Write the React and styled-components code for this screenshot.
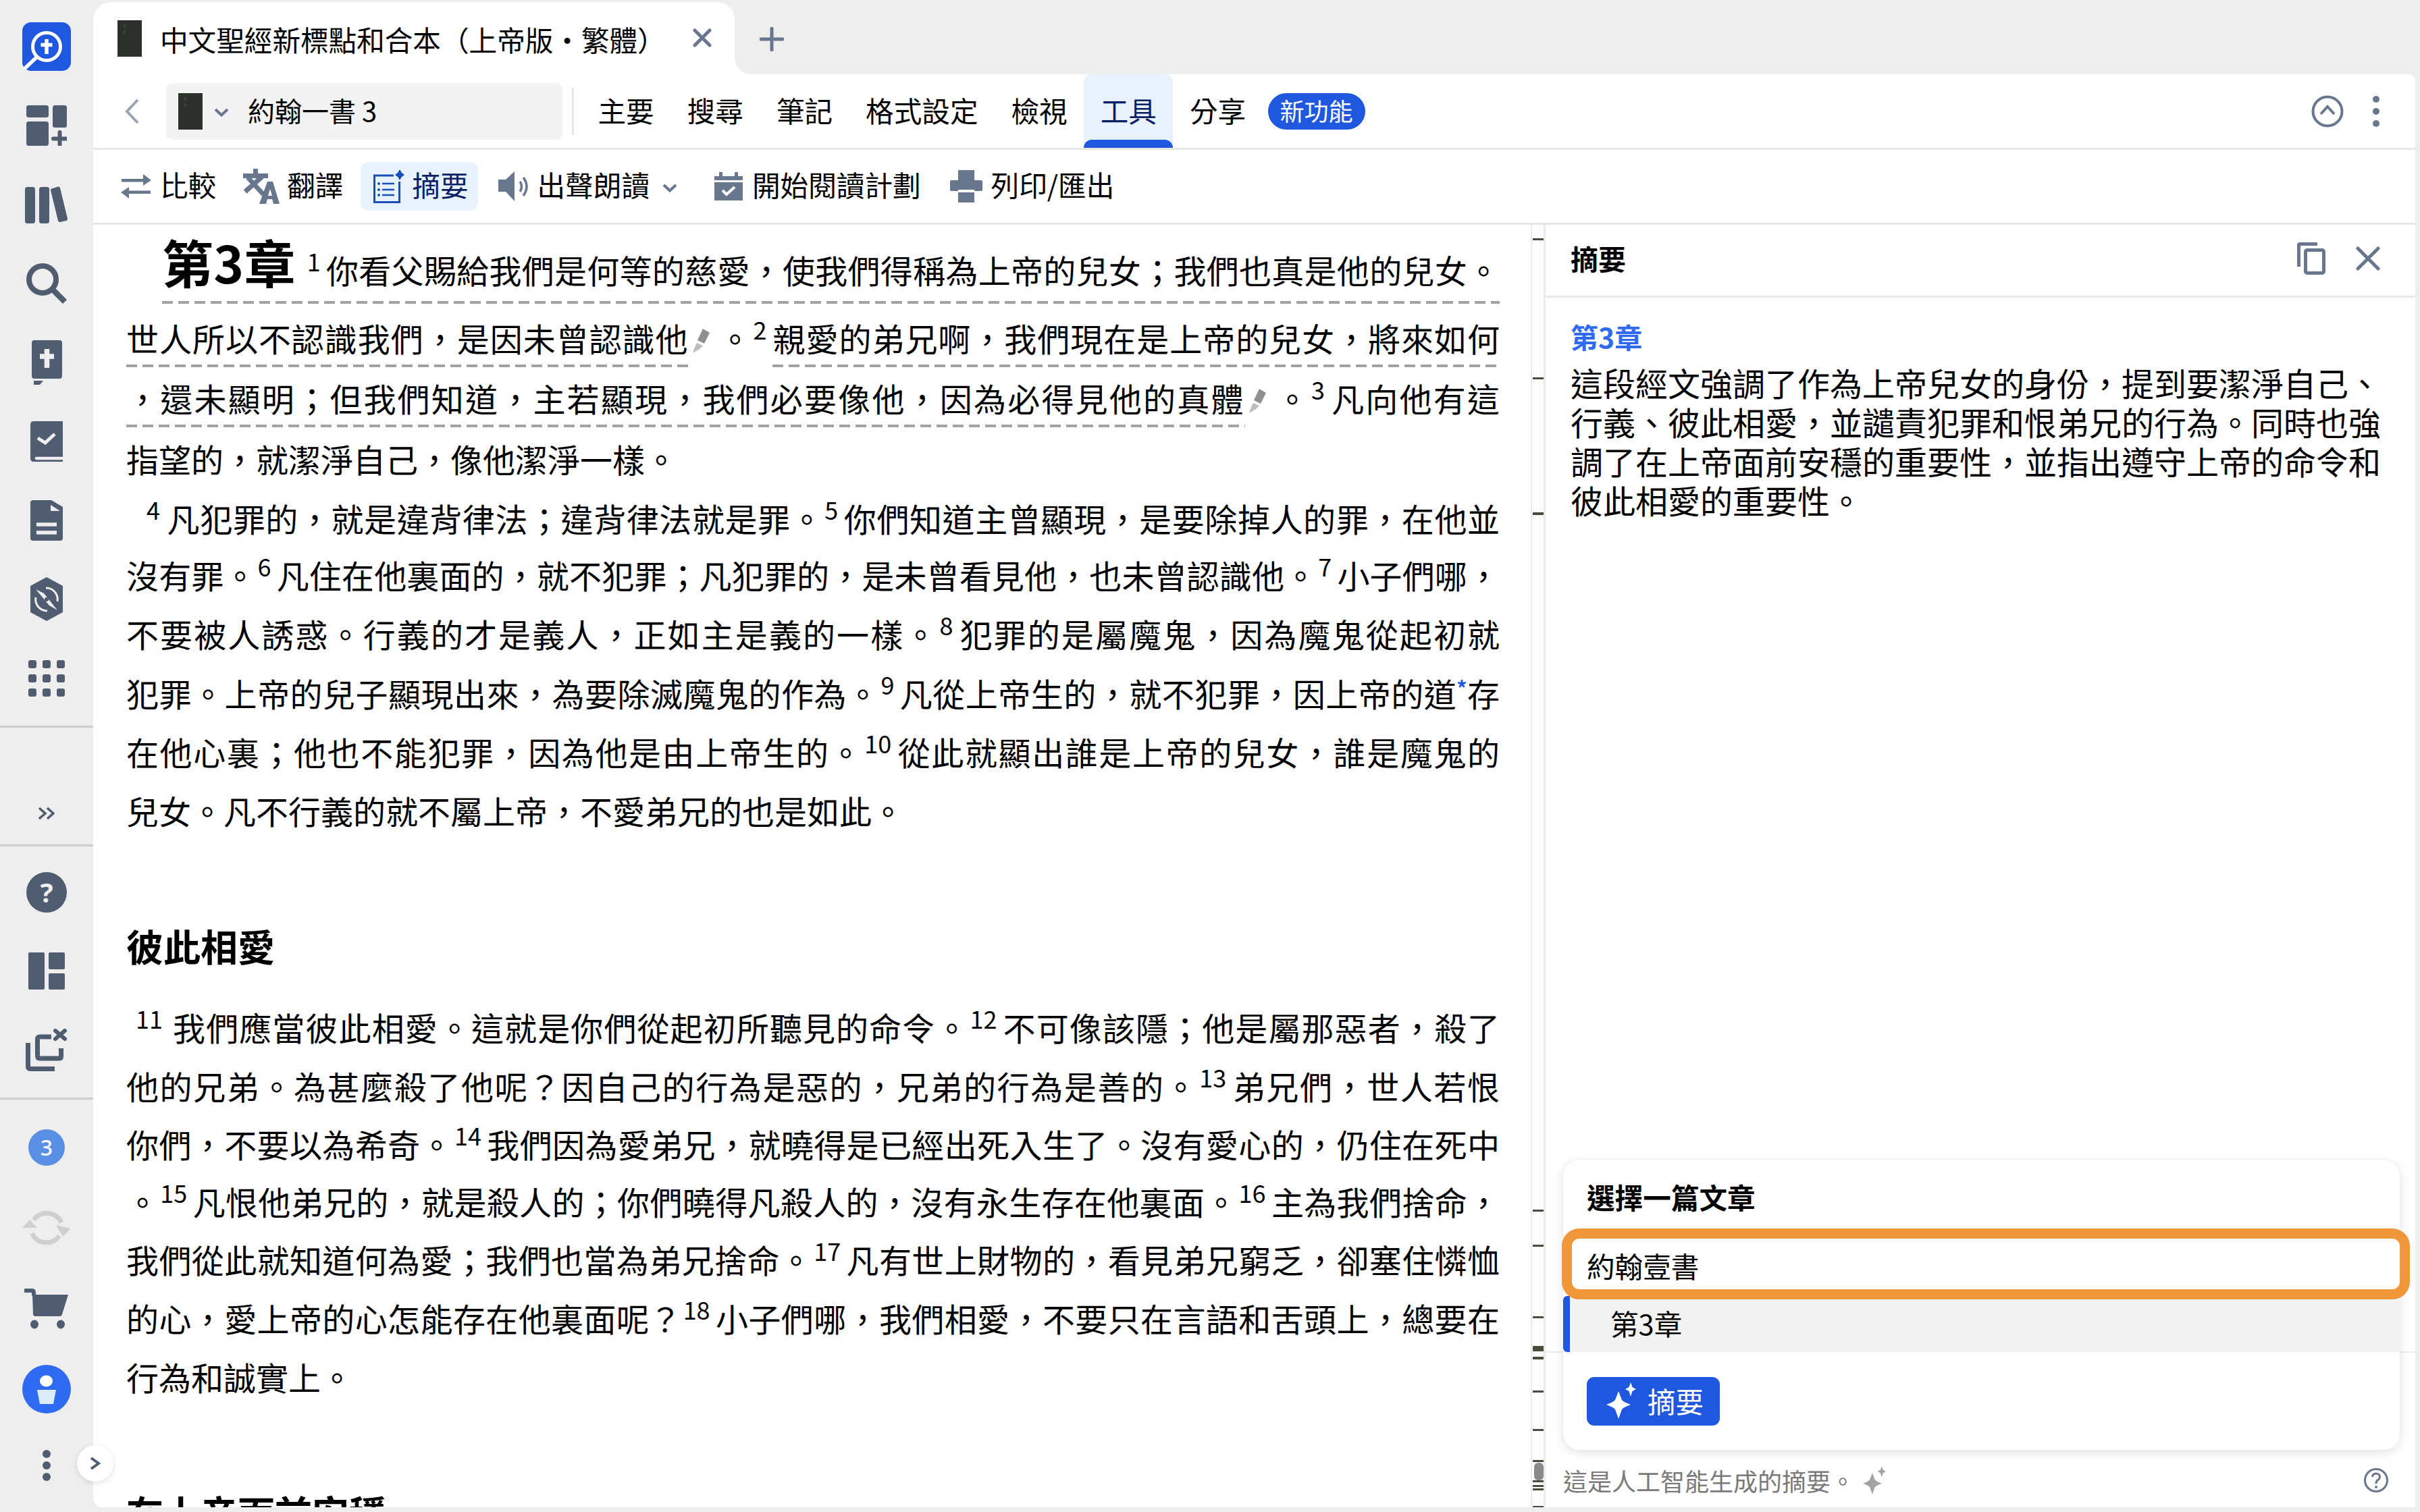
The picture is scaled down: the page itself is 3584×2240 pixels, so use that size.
import React from 'react';
import styled, { createGlobalStyle } from 'styled-components';

const Global = createGlobalStyle`
  html, body { margin: 0; padding: 0; background: #eeeeee; }
  * { box-sizing: border-box; }
  body { font-family: "Noto Sans CJK TC", "Noto Sans", sans-serif; color: #000; }
`;

const slate = '#505c70';
const steel = '#68768e';
const blue = '#1f57de';
const navy = '#0b1f66';

// ---- rail icons

const LogoIcon = () => (
  <svg width="72" height="72" viewBox="0 0 72 72">
    <rect width="72" height="72" rx="13" fill={blue} />
    <circle cx="36" cy="36" r="20.5" fill="none" stroke="#fff" strokeWidth="5" />
    <path d="M21 52 L3 69" stroke="#fff" strokeWidth="5.5" />
    <path d="M36 25 V47 M27.5 33.5 H44.5" stroke="#fff" strokeWidth="5.5" />
  </svg>
);
const DashIcon = () => (
  <svg width="60" height="60" viewBox="0 0 60 60" fill={slate}>
    <rect width="33" height="18" rx="3.5" />
    <rect y="24" width="33" height="36" rx="3.5" />
    <rect x="39" width="21" height="33" rx="3.5" />
    <path d="M49.5 40 V59 M40 49.5 H59" stroke={slate} strokeWidth="6" strokeLinecap="round" />
  </svg>
);
const LibraryIcon = () => (
  <svg width="64" height="56" viewBox="0 -2 64 56" fill={slate}>
    <rect width="15" height="54" rx="3.5" />
    <rect x="21" width="15" height="54" rx="3.5" />
    <path d="M39.5 2.5 L49 -.5 Q51.5 -1 52 1.5 L63 47 Q63.4 49 61 50 L52 52 Q50 52.4 49 50 L38 5 Q37.6 3 39.5 2.5Z" />
  </svg>
);
const SearchIcon = () => (
  <svg width="60" height="60" viewBox="0 0 60 60" fill="none" stroke={slate} strokeWidth="8">
    <circle cx="24" cy="24" r="20" />
    <path d="M39 39 L57 57" strokeWidth="8.5" />
  </svg>
);
const BiblePlusIcon = () => (
  <svg width="45" height="66" viewBox="0 0 45 66" fill={slate}>
    <rect width="45" height="57" rx="4" />
    <path d="M22.5 13 V41 M12 24 H33" stroke="#eee" strokeWidth="7.5" />
    <path d="M3 60 H17 L12 66 H3Z" />
  </svg>
);
const BookCheckIcon = () => (
  <svg width="48" height="60" viewBox="0 0 48 60" fill={slate}>
    <path d="M5 0 H48 V60 H5 Q0 60 0 55 V5 Q0 0 5 0Z" />
    <path d="M11 25 L22 32 L36 19" fill="none" stroke="#eee" strokeWidth="5" />
    <path d="M9 55 H48" stroke="#eee" strokeWidth="4.5" strokeLinecap="round" />
  </svg>
);
const DocIcon = () => (
  <svg width="48" height="60" viewBox="0 0 48 60" fill={slate}>
    <path d="M4 0 H31 L48 10 V56 Q48 60 44 60 H4 Q0 60 0 56 V4 Q0 0 4 0Z" />
    <path d="M30 7 L44 16 H30Z" fill="#eee" />
    <path d="M9 36 H39 M9 48 H39" stroke="#eee" strokeWidth="5.5" />
  </svg>
);
const CompassIcon = () => (
  <svg width="48" height="66" viewBox="0 0 48 66" fill={slate}>
    <path d="M24 0 L48 13 V52 L24 65 L0 52 V13Z" />
    <path d="M8 18 L20 24 L40 49 L28 42Z" fill="#eee" />
    <circle cx="24" cy="33" r="3" fill={slate} />
    <path d="M23 16 A17 17 0 0 1 40 36 M25 50 A17 17 0 0 1 8 30" fill="none" stroke="#eee" strokeWidth="3" />
  </svg>
);
const GridIcon = () => (
  <svg width="54" height="54" viewBox="0 0 54 54" fill={slate}>
    {[0, 21, 42].flatMap((y) =>
      [0, 21, 42].map((x) => <rect key={`${x}-${y}`} x={x} y={y} width="12" height="12" rx="3" />)
    )}
  </svg>
);
const ChevronsIcon = () => (
  <svg width="24" height="20" viewBox="0 0 24 20" fill="none" stroke={slate} strokeWidth="3.5">
    <path d="M1 2 L10 10 L1 18 M13 2 L22 10 L13 18" />
  </svg>
);
const LayoutIcon = () => (
  <svg width="54" height="55" viewBox="0 0 54 55" fill={slate}>
    <rect width="24" height="55" rx="2" />
    <rect x="30" width="24" height="25" rx="2" />
    <rect x="30" y="31" width="24" height="24" rx="2" />
  </svg>
);
const CloseAllIcon = () => (
  <svg width="62" height="63" viewBox="0 0 62 63" fill="none" stroke={slate} strokeWidth="7">
    <path d="M38 12 H21 Q17.5 12 17.5 16 V40 Q17.5 44 21 44 H50 Q52.5 44 52.5 41 V29" />
    <path d="M3.5 21 V56 Q3.5 59.5 7 59.5 H43" />
    <path d="M44 3 L58 15 M58 3 L44 15" strokeLinecap="round" strokeWidth="6" />
  </svg>
);
const SyncIcon = () => (
  <svg width="72" height="60" viewBox="0 0 72 60" fill="none" stroke="#cfcfcf" strokeWidth="7">
    <path d="M17 18 A24 24 0 0 1 58 22" />
    <path d="M55 42 A24 24 0 0 1 14 38" />
    <path d="M0 30 L11 18 L22 30Z M50 26 L72 31 L60 43Z" fill="#cfcfcf" stroke="none" />
  </svg>
);
const CartIcon = () => (
  <svg width="66" height="60" viewBox="0 0 66 60" fill={slate}>
    <path d="M2 3 H12 Q14 3 14 6 V9" fill="none" stroke={slate} strokeWidth="6" strokeLinecap="round" />
    <path d="M12 9 H65 L56 38 Q55.5 41 52 41 H17 Q13 41 13 38Z" />
    <ellipse cx="15" cy="53" rx="6" ry="6.5" />
    <ellipse cx="54" cy="53" rx="6" ry="6.5" />
  </svg>
);
const UserIcon = () => (
  <svg width="72" height="72" viewBox="0 0 72 72">
    <circle cx="36" cy="36" r="36" fill="#2e6bf2" />
    <ellipse cx="35.5" cy="24" rx="9.5" ry="8.5" fill="#fff" />
    <path d="M22 37 H50 L46 58 H26Z" fill="#dcecfb" />
  </svg>
);
const DotsIcon = ({ color = slate, r = 6 }) => (
  <svg width={r * 2} height="48" viewBox={`0 0 ${r * 2} 48`} fill={color}>
    <circle cx={r} cy={r + 1} r={r} />
    <circle cx={r} cy="24" r={r} />
    <circle cx={r} cy={47 - r} r={r} />
  </svg>
);

// ---- toolbar icons

const CoverIcon = () => (
  <svg width="36" height="54" viewBox="0 0 36 54">
    <rect width="36" height="54" fill="#2b302b" />
    <rect x="9" y="6" width="3" height="5" fill="#3f4539" />
    <rect x="9" y="15" width="3" height="5" fill="#3f4539" />
  </svg>
);
const Cross = ({ size, width = 5 }) => (
  <svg width={size} height={size} viewBox={`0 0 ${size} ${size}`} fill="none" stroke={steel} strokeWidth={width} strokeLinecap="round">
    <path d={`M3 3 L${size - 3} ${size - 3} M${size - 3} 3 L3 ${size - 3}`} />
  </svg>
);
const PlusIcon = () => (
  <svg width="36" height="36" viewBox="0 0 36 36" fill="none" stroke={steel} strokeWidth="5" strokeLinecap="round">
    <path d="M18 2 V34 M2 18 H34" />
  </svg>
);
const BackIcon = () => (
  <svg width="24" height="38" viewBox="0 0 24 38" fill="none" stroke="#98a3b5" strokeWidth="4">
    <path d="M20 2 L4 19 L20 36" />
  </svg>
);
const Caret = ({ w = 22 }) => (
  <svg width={w} height="13" viewBox="0 0 22 13" fill="none" stroke={steel} strokeWidth="4">
    <path d="M2 2 L11 10.5 L20 2" />
  </svg>
);
const UpCircleIcon = () => (
  <svg width="48" height="48" viewBox="0 0 48 48" fill="none" stroke={steel} strokeWidth="4">
    <circle cx="24" cy="24" r="21.5" />
    <path d="M14 28 L24 17 L34 28" />
  </svg>
);
const CompareIcon = () => (
  <svg width="45" height="36" viewBox="0 0 45 36" fill={steel}>
    <rect x="1" y="7" width="34" height="4.5" />
    <path d="M33 0 L45 9 L33 17Z" />
    <rect x="10" y="24.5" width="34" height="4.5" />
    <path d="M12 19 L0 27 L12 36Z" />
  </svg>
);
const TranslateIcon = () => (
  <svg width="54" height="52" viewBox="0 0 54 52" fill={steel}>
    <rect x="15" width="7" height="9" />
    <rect y="7" width="37" height="7" />
    <path d="M7 13 L30 38" fill="none" stroke={steel} strokeWidth="7" />
    <path d="M28 12 L3 34" fill="none" stroke={steel} strokeWidth="7" />
    <path d="M36 19 H44 L54 52 H45 L43 45 H36 L34 52 H24Z" />
    <path d="M40 30 L37 40 H43Z" fill="#fff" />
  </svg>
);
const SummaryIcon = () => (
  <svg width="46" height="50" viewBox="0 0 46 50" fill="none" stroke="#1a4fb8" strokeWidth="3">
    <path d="M30 9 H1.5 V48.5 H38.5 V18" />
    <path d="M13 21 H31 M13 30 H31 M13 38 H31" strokeWidth="2.6" />
    <circle cx="8" cy="21" r="2" fill="#1a4fb8" stroke="none" />
    <circle cx="8" cy="30" r="2" fill="#1a4fb8" stroke="none" />
    <circle cx="8" cy="38" r="2" fill="#1a4fb8" stroke="none" />
    <path d="M39 0 L42 5 L46 8 L42 11 L39 16 L36 11 L32 8 L36 5Z" fill="#1a4fb8" stroke="none" />
  </svg>
);
const SpeakerIcon = () => (
  <svg width="46" height="44" viewBox="0 0 46 44" fill={steel}>
    <path d="M0 12 H11 L24 0 V44 L11 30 H0Z" />
    <path d="M32 15 Q37 22 32 30 M37 9 Q47 22 37 36" fill="none" stroke={steel} strokeWidth="3.5" />
  </svg>
);
const CalendarIcon = () => (
  <svg width="42" height="42" viewBox="0 0 42 42" fill={steel}>
    <rect x="7" width="5" height="6" />
    <rect x="30" width="5" height="6" />
    <rect y="6" width="42" height="6" />
    <rect y="15" width="42" height="27" />
    <path d="M12 27 L18 33 L30 22" fill="none" stroke="#fff" strokeWidth="4" />
  </svg>
);
const PrinterIcon = () => (
  <svg width="48" height="48" viewBox="0 0 48 48" fill={steel}>
    <rect x="12" width="24" height="15" />
    <rect y="15" width="48" height="16" rx="2" />
    <rect x="12" y="33" width="24" height="15" />
    <rect x="12" y="29" width="24" height="4" fill="#fff" />
  </svg>
);
const CopyIcon = () => (
  <svg width="42" height="48" viewBox="0 0 42 48" fill="none" stroke={steel} strokeWidth="5">
    <path d="M2.5 36 V4 Q2.5 2.5 4 2.5 H30" />
    <rect x="12.5" y="11.5" width="27" height="34" rx="2.5" />
  </svg>
);
const SparkleMark = styled.svg`
  flex: none;
  margin-left: ${(p) => p.$ml || 0}px;
`;
const Sparkles = ({ color, w = 44, h = 54, ml }) => (
  <SparkleMark $ml={ml} width={w} height={h} viewBox="0 0 44 54" fill={color}>
    <path d="M18 13 L23 26 Q25 29 36 33 Q25 37 23 40 L18 54 L13 40 Q11 37 0 33 Q11 29 13 26Z" />
    <path d="M36 0 L38.5 7 L44 10 L38.5 13 L36 21 L33.5 13 L28 10 L33.5 7Z" />
  </SparkleMark>
);
const HelpIcon = () => (
  <svg width="36" height="38" viewBox="0 0 36 38" fill="none" stroke={steel} strokeWidth="3">
    <circle cx="18" cy="19" r="16.5" />
    <path d="M12.5 14 Q13 9 18 9 Q23.5 9.5 23.5 14 Q23.5 17 20 19 Q18 20.5 18 24" />
    <circle cx="18" cy="29" r="2" fill={steel} stroke="none" />
  </svg>
);
const PenMark = styled.svg`
  display: inline-block;
  width: 26px;
  height: 36px;
  margin: 0 12px 0 6px;
  vertical-align: -2px;
`;
const Pen = () => (
  <PenMark viewBox="0 0 26 36">
    <path d="M15 0 L25 6 L17 22 L7 17Z" fill="#8f8f8f" />
    <path d="M6 21 L15 25 L10 30 L0 36 L3 27Z" fill="#bdbdbd" />
  </PenMark>
);

// ---- page frame

const Page = styled.div`
  display: flex;
  width: 3584px;
  height: 2240px;
  overflow: hidden;
  background: #eeeeee;
`;

const Rail = styled.nav`
  position: relative;
  flex: 0 0 138px;
  display: flex;
  flex-direction: column;
`;

const RailGroup = styled.div`
  flex: none;
  padding-top: ${(p) => p.$top}px;
  display: flex;
  flex-direction: column;
  justify-content: ${(p) => (p.$h ? 'center' : 'flex-start')};
  align-items: center;
  height: ${(p) => (p.$h ? `${p.$h}px` : 'auto')};
`;

const RailSlot = styled.div`
  height: ${(p) => p.$h || 117}px;
  width: 100%;
  display: flex;
  align-items: center;
  justify-content: center;
`;

const RailDivider = styled.div`
  height: 3px;
  background: #cfcfcf;
  margin-top: ${(p) => p.$mt || 0}px;
  flex: none;
`;

const HelpDot = styled.div`
  width: 60px;
  height: 60px;
  border-radius: 50%;
  background: ${slate};
  color: #eee;
  font: 700 40px/60px "Noto Sans", sans-serif;
  text-align: center;
`;

const CountBadge = styled.div`
  width: 54px;
  height: 54px;
  border-radius: 50%;
  background: #5a8fe6;
  color: #fff;
  font: 500 32px/54px "Noto Sans", sans-serif;
  text-align: center;
`;

const ExpandButton = styled.button`
  position: absolute;
  left: 114px;
  top: 2141px;
  width: 54px;
  height: 54px;
  padding: 0;
  border: none;
  border-radius: 50%;
  background: #fff;
  box-shadow: 0 2px 8px rgba(0, 0, 0, 0.12);
  display: flex;
  align-items: center;
  justify-content: center;
  z-index: 5;
`;

const Workspace = styled.div`
  flex: 1;
  min-width: 0;
  display: flex;
  flex-direction: column;
  padding: 0 7px 7px 0;
`;

const TabStrip = styled.div`
  height: 110px;
  flex: none;
  padding-top: 3px;
  display: flex;
`;

const Tab = styled.div`
  position: relative;
  width: 950px;
  background: #fff;
  border-radius: 26px 26px 0 0;
  display: flex;
  align-items: flex-start;
  padding: 27px 0 0 36px;

  &::after {
    content: '';
    position: absolute;
    right: -24px;
    bottom: 0;
    width: 24px;
    height: 24px;
    background: radial-gradient(circle at 100% 0, transparent 23.5px, #fff 24px);
  }
`;

const TabTitle = styled.span`
  margin-left: 27px;
  font-size: 41.6px;
  line-height: 56px;
  white-space: nowrap;
`;

const TabClose = styled.span`
  position: absolute;
  left: 888px;
  top: 39px;
  line-height: 0;
`;

const TabAdd = styled.span`
  margin: 37px 0 0 37px;
  line-height: 0;
`;

const Surface = styled.div`
  flex: 1;
  min-height: 0;
  background: #fff;
  border-radius: 0 10px 0 14px;
  display: flex;
  flex-direction: column;
  overflow: hidden;
`;

const Ribbon = styled.div`
  height: 112px;
  flex: none;
  display: flex;
  align-items: center;
  border-bottom: 3px solid #e6e6e6;
  padding: 0 53px 0 46px;
`;

const RibbonBack = styled.span`
  line-height: 0;
  margin-right: 38px;
`;

const BookPicker = styled.div`
  width: 587px;
  height: 84px;
  background: #f3f3f3;
  border-radius: 9px;
  display: flex;
  align-items: center;
  padding-left: 18px;
  font-size: 40px;
  flex: none;
`;

const BookName = styled.span`
  margin-bottom: 4px;
`;

const PickerCaret = styled.span`
  line-height: 0;
  margin: 0 28px 0 17px;
`;

const RibbonDivider = styled.div`
  width: 3px;
  height: 70px;
  background: #e6e6e6;
  margin: 0 11px 0 14px;
  flex: none;
`;

const NavItem = styled.div`
  position: relative;
  align-self: stretch;
  display: flex;
  align-items: center;
  padding: 0 24.5px 4px;
  font-size: 41.6px;
  white-space: nowrap;
  color: ${(p) => (p.$active ? navy : '#000')};
  background: ${(p) => (p.$active ? '#e8f2fc' : 'transparent')};
  border-radius: ${(p) => (p.$active ? '12px 12px 0 0' : '0')};

  &::after {
    content: ${(p) => (p.$active ? "''" : 'none')};
    position: absolute;
    left: 0;
    right: 0;
    bottom: 0;
    height: 12px;
    background: ${blue};
    border-radius: 12px 12px 0 0;
  }
`;

const NewBadge = styled.span`
  width: 144px;
  height: 54px;
  margin-left: 8px;
  border-radius: 27px;
  background: ${blue};
  color: #fff;
  font-size: 36px;
  line-height: 50px;
  text-align: center;
  flex: none;
`;

const RibbonEnd = styled.div`
  margin-left: auto;
  display: flex;
  align-items: center;
  gap: 43px;
  line-height: 0;
`;

const Tools = styled.div`
  height: 111px;
  flex: none;
  display: flex;
  align-items: center;
  border-bottom: 3px solid #e6e6e6;
  padding-left: 41px;
`;

const Tool = styled.div`
  display: flex;
  align-items: center;
  height: 72px;
  gap: ${(p) => p.$gap || 13}px;
  padding: ${(p) => (p.$active ? '0 14px 0 19px' : '0')};
  margin-left: ${(p) => p.$ml || 0}px;
  font-size: 41.6px;
  white-space: nowrap;
  color: ${(p) => (p.$active ? navy : '#000')};
  background: ${(p) => (p.$active ? '#e8f2fc' : 'transparent')};
  border-radius: 12px;
`;

const ToolLabel = styled.span`
  margin-bottom: 6px;
`;

const ToolCaret = styled.span`
  line-height: 0;
  margin-left: 6px;
`;

const Body = styled.div`
  flex: 1;
  min-height: 0;
  display: flex;
`;

// ---- reader

const Reader = styled.article`
  flex: 0 0 2129px;
  overflow: hidden;
  padding: 0 46px 0 49px;
  font-size: 48px;
`;

const Line = styled.div`
  height: ${(p) => p.$h || 87}px;
  line-height: ${(p) => p.$lh || p.$h || 87}px;
  text-align: justify;
  text-align-last: ${(p) => (p.$last ? 'left' : 'justify')};
  padding-left: ${(p) => p.$indent || 0}px;
`;

const ChapterMark = styled.span`
  font-size: 76px;
  font-weight: 700;
  margin-right: 15px;
`;

const Verse = styled.sup`
  font-size: 36px;
  line-height: 0;
  vertical-align: 18px;
  margin: 0 ${(p) => p.$gap || 8}px 0 2px;
`;

const Note = styled.sup`
  color: ${blue};
  font-size: 30px;
  font-weight: 700;
  line-height: 0;
  vertical-align: 16px;
`;

const Marked = styled.span`
  padding-bottom: ${(p) => (p.$far ? 16 : 9)}px;
  background: repeating-linear-gradient(90deg, #a2a2a2 0 16px, transparent 16px 24px) left bottom / 100% 4px no-repeat;
`;

const SectionTitle = styled.h2`
  margin: ${(p) => p.$top}px 0 ${(p) => p.$bottom}px;
  font-size: 55px;
  line-height: 80px;
  font-weight: 700;
`;

// ---- minimap strip

const MarkStrip = styled.div`
  position: relative;
  flex: 0 0 22px;
  background: #fdfdfd;
  border-left: 2px solid #ececec;
  border-right: 3px solid #ececec;
`;

const Tick = styled.i`
  position: absolute;
  left: 1px;
  right: 0;
  top: ${(p) => p.$y - 333}px;
  height: ${(p) => p.$h || 3}px;
  background: #4c4a3c;
`;

const Thumb = styled.i`
  position: absolute;
  left: 3px;
  width: 14px;
  top: ${2167 - 333}px;
  height: 26px;
  border-radius: 6px;
  background: #8a8a8a;
`;

// ---- summary panel

const Panel = styled.aside`
  flex: 1;
  min-width: 0;
  display: flex;
  flex-direction: column;
  background: #fff;
  isolation: isolate;
`;

const PanelHead = styled.header`
  height: 108px;
  flex: none;
  display: flex;
  align-items: center;
  padding: 0 52px 5px 37px;
  border-bottom: 3px solid #e8e8e8;
`;

const PanelTitle = styled.h3`
  margin: 0 0 3px;
  font-size: 41px;
  font-weight: 700;
`;

const PanelActions = styled.div`
  margin-left: auto;
  display: flex;
  align-items: center;
  gap: 45px;
  line-height: 0;
`;

const PanelText = styled.div`
  flex: 1;
  min-height: 0;
  padding: 33px 37px 0 37px;
`;

const PartTitle = styled.div`
  color: #2f6bf0;
  font-size: 41px;
  font-weight: 700;
  line-height: 48px;
  margin-bottom: 15px;
`;

const PartBody = styled.p`
  margin: 0;
  font-size: 48px;
  line-height: 58px;
`;

const Picker = styled.section`
  position: relative;
  flex: none;
  margin: 0 23px 0 26px;
  height: 429px;
  background: #fff;
  border-radius: 24px;
  box-shadow: 0 3px 16px rgba(0, 0, 0, 0.13);

  &::before {
    content: '';
    position: absolute;
    left: -26px;
    right: -23px;
    top: 283px;
    height: 2px;
    background: #ececec;
    z-index: -1;
  }
`;

const PickerTitle = styled.div`
  height: 101px;
  padding: 28px 0 0 35px;
  font-size: 41.6px;
  font-weight: 700;
  line-height: 52px;
`;

const PickerBook = styled.div`
  position: relative;
  z-index: 1;
  height: 105px;
  margin: 0 -15px 0 -2px;
  border: 15px solid #f0973a;
  border-radius: 26px;
  background: #fff;
  padding: 5px 0 0 22px;
  display: flex;
  align-items: center;
  font-size: 41.6px;
`;

const PickerChapter = styled.div`
  height: 83px;
  margin-top: -5px;
  padding: 0 0 3px 60px;
  background: #f3f3f3;
  border-left: 10px solid ${blue};
  border-radius: 6px 0 0 6px;
  display: flex;
  align-items: center;
  font-size: 41.6px;
`;

const SummaryButton = styled.button`
  margin: 37px 0 0 35px;
  width: 197px;
  height: 72px;
  border: none;
  border-radius: 11px;
  background: ${blue};
  color: #fff;
  display: flex;
  align-items: center;
  padding: 0 0 2px 29px;
  gap: 17px;
  font: 41.6px "Noto Sans CJK TC", sans-serif;
`;

const Disclaimer = styled.footer`
  height: 85px;
  flex: none;
  display: flex;
  align-items: center;
  padding: 5px 40px 0 26px;
  color: #7a7a7a;
  font-size: 36px;
`;

const DisclaimerHelp = styled.span`
  margin-left: auto;
  line-height: 0;
`;

const ticks = [
  [353], [559], [759, 4], [1792], [1844], [1950], [1994, 8], [2010, 4], [2060],
  [2117], [2163], [2193], [2200], [2205], [2231],
];

export default function App() {
  return (
    <Page>
      <Global />
      <Rail>
        <RailGroup $top={10}>
          <RailSlot><LogoIcon /></RailSlot>
          <RailSlot><DashIcon /></RailSlot>
          <RailSlot><LibraryIcon /></RailSlot>
          <RailSlot><SearchIcon /></RailSlot>
          <RailSlot><BiblePlusIcon /></RailSlot>
          <RailSlot><BookCheckIcon /></RailSlot>
          <RailSlot><DocIcon /></RailSlot>
          <RailSlot><CompassIcon /></RailSlot>
          <RailSlot><GridIcon /></RailSlot>
        </RailGroup>
        <RailDivider $mt={12} />
        <RailGroup $top={80} $h={173}><ChevronsIcon /></RailGroup>
        <RailDivider />
        <RailGroup $top={9}>
          <RailSlot><HelpDot>?</HelpDot></RailSlot>
          <RailSlot><LayoutIcon /></RailSlot>
          <RailSlot><CloseAllIcon /></RailSlot>
        </RailGroup>
        <RailDivider $mt={12} />
        <RailGroup $top={12}>
          <RailSlot $h={118}><CountBadge>3</CountBadge></RailSlot>
          <RailSlot $h={120}><SyncIcon /></RailSlot>
          <RailSlot $h={120}><CartIcon /></RailSlot>
          <RailSlot><UserIcon /></RailSlot>
          <RailSlot $h={110}><DotsIcon /></RailSlot>
        </RailGroup>
        <ExpandButton>
          <svg width="16" height="20" viewBox="0 0 16 20" fill="none" stroke={slate} strokeWidth="4">
            <path d="M2 2 L13 10 L2 18" />
          </svg>
        </ExpandButton>
      </Rail>

      <Workspace>
        <TabStrip>
          <Tab>
            <CoverIcon />
            <TabTitle>中文聖經新標點和合本（上帝版・繁體）</TabTitle>
            <TabClose><Cross size={28} /></TabClose>
          </Tab>
          <TabAdd><PlusIcon /></TabAdd>
        </TabStrip>

        <Surface>
          <Ribbon>
            <RibbonBack><BackIcon /></RibbonBack>
            <BookPicker>
              <CoverIcon />
              <PickerCaret><Caret /></PickerCaret>
              <BookName>約翰一書 3</BookName>
            </BookPicker>
            <RibbonDivider />
            <NavItem>主要</NavItem>
            <NavItem>搜尋</NavItem>
            <NavItem>筆記</NavItem>
            <NavItem>格式設定</NavItem>
            <NavItem>檢視</NavItem>
            <NavItem $active>工具</NavItem>
            <NavItem>分享</NavItem>
            <NewBadge>新功能</NewBadge>
            <RibbonEnd>
              <UpCircleIcon />
              <DotsIcon color={steel} r={5} />
            </RibbonEnd>
          </Ribbon>

          <Tools>
            <Tool><CompareIcon /><ToolLabel>比較</ToolLabel></Tool>
            <Tool $ml={40} $gap={11}><TranslateIcon /><ToolLabel>翻譯</ToolLabel></Tool>
            <Tool $ml={26} $gap={11} $active><SummaryIcon /><ToolLabel>摘要</ToolLabel></Tool>
            <Tool $ml={30} $gap={12}>
              <SpeakerIcon /><ToolLabel>出聲朗讀</ToolLabel><ToolCaret><Caret w={24} /></ToolCaret>
            </Tool>
            <Tool $ml={54} $gap={14}><CalendarIcon /><ToolLabel>開始閱讀計劃</ToolLabel></Tool>
            <Tool $ml={43}><PrinterIcon /><ToolLabel>列印/匯出</ToolLabel></Tool>
          </Tools>

          <Body>
            <Reader>
              <Line $h={123} $lh={109} $indent={53}>
                <Marked $far>
                  <ChapterMark>第3章</ChapterMark><Verse>1</Verse>你看父賜給我們是何等的慈愛，使我們得稱為上帝的兒女；我們也真是他的兒女。
                </Marked>
              </Line>
              <Line $h={89}>
                <Marked>世人所以不認識我們，是因未曾認識他</Marked><Pen />。<Verse>2</Verse>
                <Marked>親愛的弟兄啊，我們現在是上帝的兒女，將來如何</Marked>
              </Line>
              <Line $h={89}>
                <Marked>，還未顯明；但我們知道，主若顯現，我們必要像他，因為必得見他的真體</Marked><Pen />。<Verse>3</Verse>
                凡向他有這
              </Line>
              <Line $h={91} $last>指望的，就潔淨自己，像他潔淨一樣。</Line>
              <Line $h={84} $indent={28}>
                <Verse $gap={10}>4</Verse>凡犯罪的，就是違背律法；違背律法就是罪。<Verse>5</Verse>你們知道主曾顯現，是要除掉人的罪，在他並
              </Line>
              <Line $h={85}>
                沒有罪。<Verse>6</Verse>凡住在他裏面的，就不犯罪；凡犯罪的，是未曾看見他，也未曾認識他。<Verse>7</Verse>小子們哪，
              </Line>
              <Line $h={89}>
                不要被人誘惑。行義的才是義人，正如主是義的一樣。<Verse>8</Verse>犯罪的是屬魔鬼，因為魔鬼從起初就
              </Line>
              <Line $h={87}>
                犯罪。上帝的兒子顯現出來，為要除滅魔鬼的作為。<Verse>9</Verse>凡從上帝生的，就不犯罪，因上帝的道<Note>*</Note>存
              </Line>
              <Line $h={87}>
                在他心裏；他也不能犯罪，因為他是由上帝生的。<Verse>10</Verse>從此就顯出誰是上帝的兒女，誰是魔鬼的
              </Line>
              <Line $h={87} $last>兒女。凡不行義的就不屬上帝，不愛弟兄的也是如此。</Line>

              <SectionTitle $top={116} $bottom={38}>彼此相愛</SectionTitle>

              <Line $h={87} $indent={12}>
                <Verse $gap={14}>11</Verse>我們應當彼此相愛。這就是你們從起初所聽見的命令。<Verse>12</Verse>不可像該隱；他是屬那惡者，殺了
              </Line>
              <Line $h={87}>
                他的兄弟。為甚麼殺了他呢？因自己的行為是惡的，兄弟的行為是善的。<Verse>13</Verse>弟兄們，世人若恨
              </Line>
              <Line $h={84}>
                你們，不要以為希奇。<Verse>14</Verse>我們因為愛弟兄，就曉得是已經出死入生了。沒有愛心的，仍住在死中
              </Line>
              <Line $h={86}>
                。<Verse>15</Verse>凡恨他弟兄的，就是殺人的；你們曉得凡殺人的，沒有永生存在他裏面。<Verse>16</Verse>主為我們捨命，
              </Line>
              <Line $h={87}>
                我們從此就知道何為愛；我們也當為弟兄捨命。<Verse>17</Verse>凡有世上財物的，看見弟兄窮乏，卻塞住憐恤
              </Line>
              <Line $h={87}>
                的心，愛上帝的心怎能存在他裏面呢？<Verse>18</Verse>小子們哪，我們相愛，不要只在言語和舌頭上，總要在
              </Line>
              <Line $h={87} $last>行為和誠實上。</Line>

              <SectionTitle $top={116} $bottom={0}>在上帝面前安穩</SectionTitle>
            </Reader>

            <MarkStrip>
              {ticks.map(([y, h]) => <Tick key={y} $y={y} $h={h} />)}
              <Thumb />
            </MarkStrip>

            <Panel>
              <PanelHead>
                <PanelTitle>摘要</PanelTitle>
                <PanelActions>
                  <CopyIcon />
                  <Cross size={36} />
                </PanelActions>
              </PanelHead>
              <PanelText>
                <PartTitle>第3章</PartTitle>
                <PartBody>
                  這段經文強調了作為上帝兒女的身份，提到要潔淨自己、行義、彼此相愛，並譴責犯罪和恨弟兄的行為。同時也強調了在上帝面前安穩的重要性，並指出遵守上帝的命令和彼此相愛的重要性。
                </PartBody>
              </PanelText>
              <Picker>
                <PickerTitle>選擇一篇文章</PickerTitle>
                <PickerBook>約翰壹書</PickerBook>
                <PickerChapter>第3章</PickerChapter>
                <SummaryButton>
                  <Sparkles color="#fff" />
                  摘要
                </SummaryButton>
              </Picker>
              <Disclaimer>
                這是人工智能生成的摘要。
                <Sparkles color="#a3a3a3" w={34} h={42} ml={12} />
                <DisclaimerHelp><HelpIcon /></DisclaimerHelp>
              </Disclaimer>
            </Panel>
          </Body>
        </Surface>
      </Workspace>
    </Page>
  );
}
